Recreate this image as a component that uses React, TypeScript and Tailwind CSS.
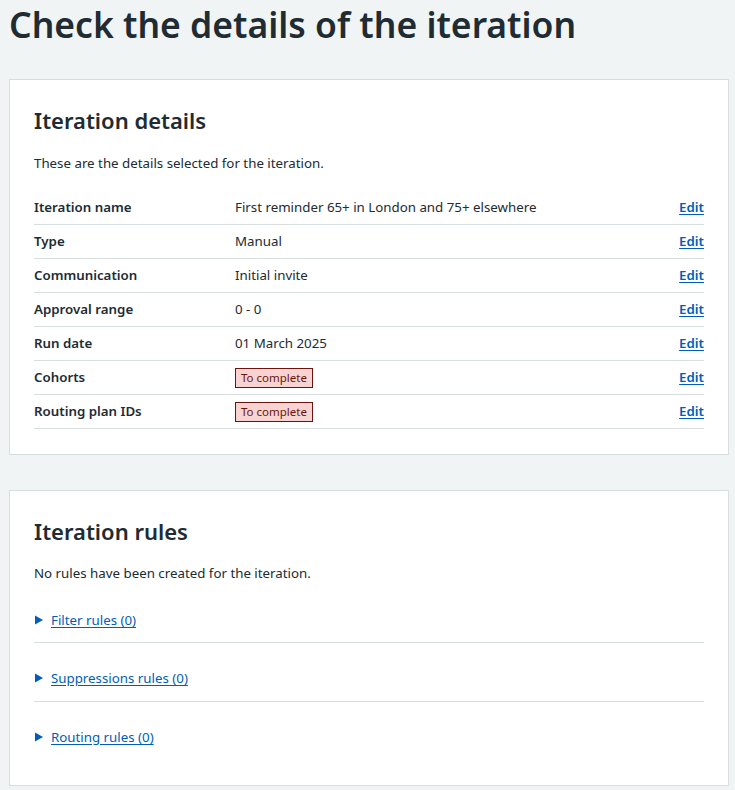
import React from "react";

const rows: { label: string; value: string; tag?: boolean }[] = [
  { label: "Iteration name", value: "First reminder 65+ in London and 75+ elsewhere" },
  { label: "Type", value: "Manual" },
  { label: "Communication", value: "Initial invite" },
  { label: "Approval range", value: "0 - 0" },
  { label: "Run date", value: "01 March 2025" },
  { label: "Cohorts", value: "To complete", tag: true },
  { label: "Routing plan IDs", value: "To complete", tag: true },
];

const rules = [
  { label: "Filter rules (0)", cls: "pt-[25px] pb-[12px] border-b border-[#d8dde0]" },
  { label: "Suppressions rules (0)", cls: "pt-[25px] pb-[13px] border-b border-[#d8dde0]" },
  { label: "Routing rules (0)", cls: "pt-[25px] pb-[13px]" },
];

export default function App() {
  return (
    <div
      className="min-h-[790px] bg-[#f0f4f5] text-[#212b32] pl-[9px] pr-[6px] pb-[6px]"
      style={{ fontFamily: '"Noto Sans", "Open Sans", sans-serif' }}
    >
      <h1 className="text-[35.5px] font-semibold leading-[48px] mb-[31px] whitespace-nowrap">
        Check the details of the iteration
      </h1>

      <section className="bg-white border border-[#d8dde0] px-[24px] pt-[24px] pb-[25px] mb-[35px]">
        <h2 className="text-[22px] font-semibold leading-[32px] mb-[17px]">Iteration details</h2>
        <p className="text-[13.3px] leading-[20px] mb-[18px]">These are the details selected for the iteration.</p>
        <dl className="text-[13.3px]">
          {rows.map((r) => (
            <div key={r.label} className="flex items-center h-[34px] border-b border-[#d8dde0]">
              <dt className="w-[201px] font-semibold">{r.label}</dt>
              <dd className="flex-1">
                {r.tag ? (
                  <span className="inline-block bg-[#f7d4d1] border border-[#6b140e] text-[#6b140e] text-[11.5px] leading-[18px] px-[5px]">
                    {r.value}
                  </span>
                ) : (
                  r.value
                )}
              </dd>
              <dd>
                <a href="#" className="text-[#005eb8] font-semibold underline underline-offset-2">
                  Edit
                </a>
              </dd>
            </div>
          ))}
        </dl>
      </section>

      <section className="bg-white border border-[#d8dde0] px-[24px] pt-[24px] pb-[25px]">
        <h2 className="text-[22px] font-semibold leading-[32px] mb-[16px]">Iteration rules</h2>
        <p className="text-[13.3px] leading-[20px] mb-[2px]">No rules have been created for the iteration.</p>
        <div className="text-[13.3px]">
          {rules.map((r) => (
            <div key={r.label} className={`flex items-center ${r.cls}`}>
              <svg width="10" height="10" viewBox="0 0 10 10" className="mr-[7px]">
                <path d="M1 0.5 L9 5 L1 9.5 Z" fill="#005eb8" />
              </svg>
              <a href="#" className="text-[#005eb8] leading-[20px] underline underline-offset-2">
                {r.label}
              </a>
            </div>
          ))}
        </div>
      </section>
    </div>
  );
}
